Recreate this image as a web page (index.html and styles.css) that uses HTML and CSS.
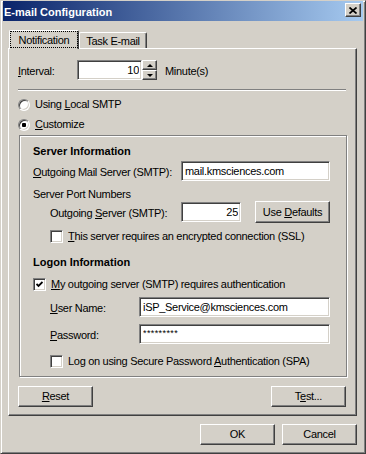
FILE: index.html
```html
<!DOCTYPE html>
<html lang="en">
<head>
<meta charset="UTF-8">
<title>E-mail Configuration</title>
<link rel="stylesheet" href="styles.css">
</head>
<body>

<div class="window">
    <div class="titlebar">
        <span class="title">E-mail Configuration</span>
        <button class="close-btn">
            <svg width="8" height="7" viewBox="0 0 8 7"><path d="M0.5 0.5 L7.5 6.5 M7.5 0.5 L0.5 6.5" stroke="#000" stroke-width="1.7" fill="none"/></svg>
        </button>
    </div>

    <div class="tabs">
        <div class="tab active"><span class="focus">Notification</span></div>
        <div class="tab">Task E-mail</div>
    </div>

    <div class="panel">
        <div class="row">
            <label class="lbl lbl-interval"><u>I</u>nterval:</label>
            <input class="edit num w-interval" type="text" value="10">
            <div class="spinner">
                <span class="spin"><i class="arrow up"></i></span>
                <span class="spin"><i class="arrow down"></i></span>
            </div>
            <span class="lbl units">Minute(s)</span>
        </div>

        <div class="separator"></div>

        <div class="option"><span class="radio"></span><span>Using <u>L</u>ocal SMTP</span></div>
        <div class="option"><span class="radio checked"></span><span><u>C</u>ustomize</span></div>

        <div class="group">
            <div class="heading">Server Information</div>
            <div class="row r-mail">
                <label class="lbl lbl-mail"><u>O</u>utgoing Mail Server (SMTP):</label>
                <input class="edit w-mail" type="text" value="mail.kmsciences.com">
            </div>
            <div class="subheading">Server Port Numbers</div>
            <div class="row r-port indent">
                <label class="lbl lbl-port">Outgoing <u>S</u>erver (SMTP):</label>
                <input class="edit num w-port" type="text" value="25">
                <button class="btn btn-defaults">Use <u>D</u>efaults</button>
            </div>
            <div class="option r-ssl indent">
                <span class="checkbox"></span>
                <span><u>T</u>his server requires an encrypted connection (SSL)</span>
            </div>

            <div class="heading logon">Logon Information</div>
            <div class="option r-auth">
                <span class="checkbox">
                    <svg width="7" height="7" viewBox="0 0 7 7"><path d="M0.5 3 L2.5 5 L6.5 1" stroke="#000" stroke-width="1.8" fill="none"/></svg>
                </span>
                <span><u>M</u>y outgoing server (SMTP) requires authentication</span>
            </div>
            <div class="row r-user indent">
                <label class="lbl lbl-user"><u>U</u>ser Name:</label>
                <input class="edit w-user" type="text" value="iSP_Service@kmsciences.com">
            </div>
            <div class="row r-pass indent">
                <label class="lbl lbl-user"><u>P</u>assword:</label>
                <input class="edit w-user password" type="text" value="*********">
            </div>
            <div class="option r-spa indent">
                <span class="checkbox"></span>
                <span>Log on using Secure Password <u>A</u>uthentication (SPA)</span>
            </div>
        </div>

        <div class="panel-buttons">
            <button class="btn"><u>R</u>eset</button>
            <button class="btn">T<u>e</u>st...</button>
        </div>
    </div>

    <div class="dialog-buttons">
        <button class="btn">OK</button>
        <button class="btn">Cancel</button>
    </div>
</div>

</body>
</html>
```

FILE: styles.css
```css
body {
    margin: 0;
    font-family: "Liberation Sans", Arial, sans-serif;
    font-size: 11px;
    line-height: 13px;
    letter-spacing: -0.3px;
    color: #000;
    background: #d4d0c8;
}
u {
    text-decoration: underline;
    text-underline-offset: 1px;
}
.window {
    width: 366px;
    height: 454px;
    box-sizing: border-box;
    background: #d4d0c8;
    border: 1px solid;
    border-color: #d4d0c8 #404040 #404040 #d4d0c8;
    box-shadow: inset 1px 1px #fff, inset -1px -1px #808080;
    padding: 0 2px 2px 2px;
}

/* title bar */
.titlebar {
    height: 20px;
    display: flex;
    align-items: flex-start;
    justify-content: space-between;
    background: linear-gradient(to right, #0a246a, #a6caf0);
    padding-left: 1px;
}
.title {
    color: #fff;
    font-weight: bold;
    letter-spacing: 0;
    margin-top: 5px;
}
.close-btn {
    width: 16px;
    height: 14px;
    margin: 2px 2px 0 0;
    padding: 0;
    display: flex;
    align-items: center;
    justify-content: center;
    background: #d4d0c8;
    border: 1px solid;
    border-color: #fff #404040 #404040 #fff;
    box-shadow: inset -1px -1px #808080;
}

/* tabs */
.tabs {
    display: flex;
    align-items: flex-end;
    height: 19px;
    margin: 9px 0 0 6px;
}
.tab {
    box-sizing: border-box;
    width: 68px;
    height: 16px;
    margin-bottom: 1px;
    padding-top: 2px;
    text-align: center;
    border: 1px solid;
    border-bottom: 0;
    border-color: #fff #404040 #404040 #fff;
    box-shadow: inset -1px 0 #808080;
    border-radius: 2px 2px 0 0;
    background: #d4d0c8;
}
.tab.active {
    position: relative;
    z-index: 1;
    width: 70px;
    height: 19px;
    margin-bottom: 0;
    padding: 0;
}
.focus {
    display: block;
    box-sizing: border-box;
    height: 17px;
    padding-top: 2px;
    border: 1px dotted #000;
}

/* panel */
.panel {
    box-sizing: border-box;
    width: 349px;
    margin: -1px 0 0 5px;
    border: 1px solid;
    border-color: #fff #404040 #404040 #fff;
    box-shadow: inset -1px -1px #808080;
    padding: 11px 9px 8px 9px;
}
.row {
    display: flex;
    align-items: center;
    height: 20px;
}
.lbl {
    padding-top: 2px;
    flex-shrink: 0;
}
.lbl-interval { width: 59px; }
.units { margin-left: 8px; }

.edit {
    box-sizing: border-box;
    height: 20px;
    padding: 0 2px 0 3px;
    font: inherit;
    letter-spacing: -0.3px;
    color: #000;
    background: #fff;
    border: 1px solid;
    border-color: #808080 #fff #fff #808080;
    box-shadow: inset 1px 1px #404040, inset -1px -1px #d4d0c8;
    outline: none;
}
.num { text-align: right; }
.password {
    font-size: 9px;
    letter-spacing: 0.4px;
    padding-bottom: 3px;
}
.w-interval { width: 65px; }
.w-mail { width: 149px; }
.w-port { width: 60px; }
.w-user { width: 191px; }

.spinner {
    display: flex;
    flex-direction: column;
    width: 15px;
    height: 20px;
}
.spin {
    box-sizing: border-box;
    height: 10px;
    display: flex;
    align-items: center;
    justify-content: center;
    border: 1px solid;
    border-color: #fff #404040 #404040 #fff;
    box-shadow: inset -1px -1px #808080;
}
.arrow {
    width: 0;
    height: 0;
    border-left: 3px solid transparent;
    border-right: 3px solid transparent;
}
.arrow.up { border-bottom: 3px solid #000; }
.arrow.down { border-top: 3px solid #000; }

.separator {
    width: 328px;
    margin-top: 9px;
    border-top: 1px solid #808080;
    border-bottom: 1px solid #fff;
}

/* radios and checkboxes */
.option {
    display: flex;
    align-items: center;
    gap: 5px;
    height: 13px;
    margin-top: 7px;
}
.radio {
    box-sizing: border-box;
    width: 12px;
    height: 12px;
    border-radius: 50%;
    background: #fff;
    border: 1px solid;
    border-color: #808080 #fff #fff #808080;
    box-shadow: inset 1px 1px #404040, inset -1px -1px #d4d0c8;
    flex-shrink: 0;
}
.radio.checked {
    background: radial-gradient(circle, #000 2px, #fff 2.5px);
}
.checkbox {
    box-sizing: border-box;
    width: 13px;
    height: 13px;
    display: flex;
    align-items: center;
    justify-content: center;
    background: #fff;
    border: 1px solid;
    border-color: #808080 #fff #fff #808080;
    box-shadow: inset 1px 1px #404040, inset -1px -1px #d4d0c8;
    flex-shrink: 0;
}

/* group box */
.group {
    box-sizing: border-box;
    width: 328px;
    margin: 4px 0 0 1px;
    border: 1px solid #808080;
    box-shadow: inset 1px 1px #fff, 1px 1px #fff;
    padding: 9px 10px 8px 13px;
}
.heading {
    font-weight: bold;
    letter-spacing: 0;
}
.heading.logon { margin-top: 13px; }
.subheading { margin-top: 7px; }
.indent { margin-left: 17px; }
.r-mail { margin-top: 3px; }
.lbl-mail { width: 148px; }
.r-port { height: 22px; }
.lbl-port { width: 131px; }
.r-ssl { margin-top: 7px; }
.r-auth { margin-top: 9px; }
.r-user { margin-top: 6px; }
.lbl-user { width: 89px; }
.r-pass { margin-top: 7px; }
.r-spa { margin-top: 11px; }

/* buttons */
.btn {
    box-sizing: border-box;
    width: 75px;
    height: 21px;
    padding: 0;
    font: inherit;
    letter-spacing: -0.3px;
    color: #000;
    background: #d4d0c8;
    border: 1px solid;
    border-color: #fff #404040 #404040 #fff;
    box-shadow: inset -1px -1px #808080;
}
.btn-defaults {
    height: 22px;
    margin-left: 14px;
}
.panel-buttons {
    display: flex;
    justify-content: space-between;
    width: 328px;
    margin-top: 9px;
}
.dialog-buttons {
    display: flex;
    justify-content: flex-end;
    gap: 7px;
    margin-top: 8px;
    padding-right: 6px;
}
```
